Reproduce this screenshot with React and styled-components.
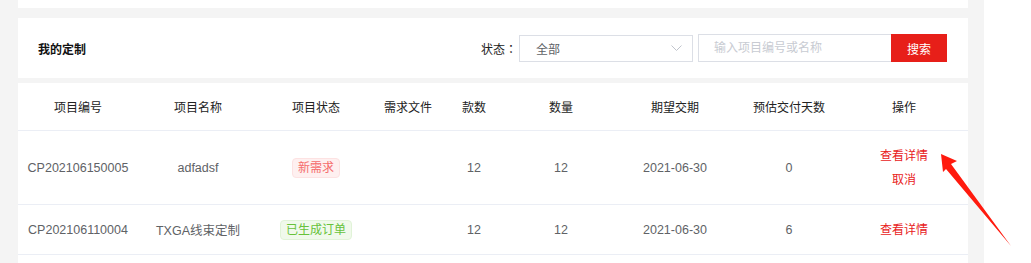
import React from "react";
import styled, { createGlobalStyle } from "styled-components";

const GlobalStyle = createGlobalStyle`
  html, body {
    margin: 0;
    padding: 0;
    background: #f4f4f4;
    font-family: "Liberation Sans", "Noto Sans CJK SC", sans-serif;
    font-size: 12px;
  }
`;

const Page = styled.div`
  position: relative;
  display: flex;
  gap: 16px;
  width: 1031px;
  height: 263px;
  overflow: hidden;
  background: #f4f4f4;
`;

const Main = styled.div`
  display: flex;
  flex-direction: column;
  width: 950px;
  padding-left: 18px;
`;

const SidePanel = styled.div`
  flex: 1;
  background: #fff;
`;

const TopCard = styled.div`
  height: 8px;
  background: #fff;
  margin-bottom: 10px;
`;

const FilterCard = styled.div`
  height: 60px;
  background: #fff;
  display: flex;
  align-items: center;
  justify-content: space-between;
  padding: 0 21px 0 20px;
  margin-bottom: 5px;
`;

const Title = styled.div`
  font-weight: bold;
  font-size: 12px;
  color: #111;
`;

const Filters = styled.div`
  display: flex;
  align-items: center;
`;

const Label = styled.span`
  color: #222;
  margin-right: 2px;
  font-family: "Noto Sans CJK TC", "Noto Sans CJK SC", sans-serif;
`;

const Select = styled.div`
  box-sizing: border-box;
  width: 174px;
  height: 27px;
  border: 1px solid #dcdfe6;
  display: flex;
  align-items: center;
  justify-content: space-between;
  padding: 0 10px 0 16px;
  color: #606266;
  margin-right: 5px;
`;

const Input = styled.input`
  box-sizing: border-box;
  width: 193px;
  height: 28px;
  border: 1px solid #dcdfe6;
  border-right: none;
  padding: 0 15px;
  font: inherit;
  outline: none;
  &::placeholder {
    color: #c8cbd2;
  }
`;

const SearchButton = styled.button`
  width: 56px;
  height: 28px;
  border: none;
  background: #e71f19;
  color: #fff;
  font: inherit;
  cursor: pointer;
`;

const TableCard = styled.div`
  flex: 1;
  background: #fff;
`;

const cols = "120px 120px 116px 68px 64px 110px 118px 110px 120px";

const HeaderRow = styled.div`
  display: grid;
  grid-template-columns: ${cols};
  height: 47px;
  align-items: center;
  border-bottom: 1px solid #ebeef5;
  color: #222;
`;

const Row = styled.div`
  display: grid;
  grid-template-columns: ${cols};
  height: ${(p) => p.$h}px;
  align-items: center;
  border-bottom: 1px solid #ebeef5;
  color: #606266;
  font-size: 12.5px;
`;

const Cell = styled.div`
  display: flex;
  flex-direction: column;
  align-items: center;
  justify-content: center;
  white-space: nowrap;
`;

const Tag = styled.span`
  display: inline-block;
  box-sizing: border-box;
  height: 20px;
  line-height: 18px;
  padding: 0 5px;
  border-radius: 4px;
  font-size: 12px;
  border: 1px solid ${(p) => (p.$type === "success" ? "#e1f3d8" : "#fde2e2")};
  background: ${(p) => (p.$type === "success" ? "#f0f9eb" : "#fef0f0")};
  color: ${(p) => (p.$type === "success" ? "#67c23a" : "#f56c6c")};
`;

const Link = styled.a`
  color: #e8211b;
  font-size: 12px;
  line-height: 24px;
  cursor: pointer;
`;

const Arrow = styled.svg`
  position: absolute;
  left: 0;
  top: 0;
  pointer-events: none;
`;

const Chevron = () => (
  <svg width="11" height="6" viewBox="0 0 11 6">
    <path d="M0.5 0.5 L5.5 5.5 L10.5 0.5" fill="none" stroke="#c0c4cc" strokeWidth="1" />
  </svg>
);

const headers = ["项目编号", "项目名称", "项目状态", "需求文件", "款数", "数量", "期望交期", "预估交付天数", "操作"];

const rows = [
  { no: "CP202106150005", name: "adfadsf", status: "新需求", type: "danger", count: 12, qty: 12, date: "2021-06-30", days: 0, cancel: true, h: 73 },
  { no: "CP202106110004", name: "TXGA线束定制", status: "已生成订单", type: "success", count: 12, qty: 12, date: "2021-06-30", days: 6, cancel: false, h: 49 },
];

export default function App() {
  return (
    <>
      <GlobalStyle />
      <Page>
        <Main>
          <TopCard />
          <FilterCard>
            <Title>我的定制</Title>
            <Filters>
              <Label>状态：</Label>
              <Select>
                <span>全部</span>
                <Chevron />
              </Select>
              <Input placeholder="输入项目编号或名称" />
              <SearchButton>搜索</SearchButton>
            </Filters>
          </FilterCard>
          <TableCard>
            <HeaderRow>
              {headers.map((h) => (
                <Cell key={h}>{h}</Cell>
              ))}
            </HeaderRow>
            {rows.map((r) => (
              <Row key={r.no} $h={r.h}>
                <Cell>{r.no}</Cell>
                <Cell>{r.name}</Cell>
                <Cell>
                  <Tag $type={r.type}>{r.status}</Tag>
                </Cell>
                <Cell />
                <Cell>{r.count}</Cell>
                <Cell>{r.qty}</Cell>
                <Cell>{r.date}</Cell>
                <Cell>{r.days}</Cell>
                <Cell>
                  <Link>查看详情</Link>
                  {r.cancel && <Link>取消</Link>}
                </Cell>
              </Row>
            ))}
          </TableCard>
        </Main>
        <SidePanel />
        <Arrow width="1031" height="263" viewBox="0 0 1031 263">
          <polygon
            points="941,154 957,161 951,164 1011,246 946,169 943,172"
            fill="#ff1a0e"
          />
        </Arrow>
      </Page>
    </>
  );
}
